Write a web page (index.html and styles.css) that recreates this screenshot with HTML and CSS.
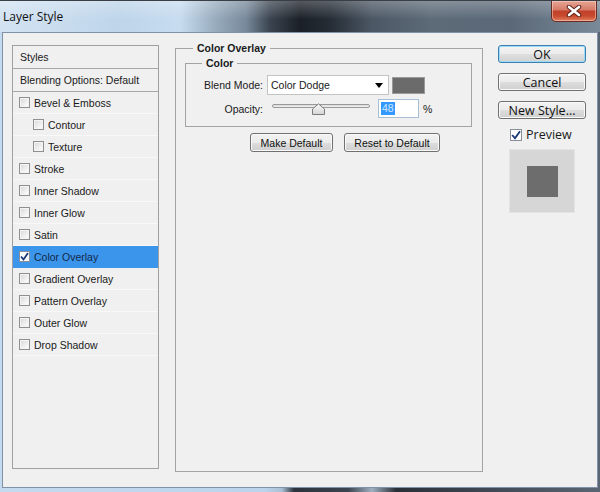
FILE: index.html
```html
<!DOCTYPE html>
<html>
<head>
<meta charset="utf-8">
<title>Layer Style</title>
<link rel="stylesheet" href="styles.css">
</head>
<body>
<div class="win">
  <div class="titlebar">
    <span class="title">Layer Style</span>
    <div class="close">
      <svg width="16" height="12" viewBox="0 0 16 12">
        <path d="M3 2 L13 10 M13 2 L3 10" stroke="#5a2018" stroke-width="4.5" stroke-linecap="round"/>
        <path d="M3 2 L13 10 M13 2 L3 10" stroke="#ffffff" stroke-width="2.6" stroke-linecap="round"/>
      </svg>
    </div>
  </div>
  <div class="client">
    <div class="list">
      <div class="hrow">Styles</div>
      <div class="hrow">Blending Options: Default</div>
      <div class="row"><span class="cb"></span>Bevel &amp; Emboss</div>
      <div class="row sub"><span class="cb"></span>Contour</div>
      <div class="row sub"><span class="cb"></span>Texture</div>
      <div class="row"><span class="cb"></span>Stroke</div>
      <div class="row"><span class="cb"></span>Inner Shadow</div>
      <div class="row"><span class="cb"></span>Inner Glow</div>
      <div class="row"><span class="cb"></span>Satin</div>
      <div class="row sel"><span class="cb on"><svg width="9" height="9" viewBox="0 0 9 9"><path d="M1 4.5 L3.5 7.5 L8 1" fill="none" stroke="#1c3a78" stroke-width="1.8"/></svg></span>Color Overlay</div>
      <div class="row"><span class="cb"></span>Gradient Overlay</div>
      <div class="row"><span class="cb"></span>Pattern Overlay</div>
      <div class="row"><span class="cb"></span>Outer Glow</div>
      <div class="row"><span class="cb"></span>Drop Shadow</div>
    </div>

    <fieldset class="group">
      <legend class="lg1">Color Overlay</legend>
      <fieldset class="inner">
        <legend class="lg2">Color</legend>
        <div class="frow">
          <span class="lbl">Blend Mode:</span>
          <div class="select">
            <span>Color Dodge</span>
            <svg width="8" height="5" viewBox="0 0 8 5"><path d="M0 0 H8 L4 5 Z" fill="#000"/></svg>
          </div>
          <span class="swatch"></span>
        </div>
        <div class="frow r2">
          <span class="lbl">Opacity:</span>
          <div class="slider">
            <span class="track"></span>
            <svg class="thumb" width="15" height="12" viewBox="0 0 15 12">
              <defs><linearGradient id="tg" x1="0" y1="0" x2="0" y2="1"><stop offset="0" stop-color="#fafafa"/><stop offset="1" stop-color="#d4d4d4"/></linearGradient></defs>
              <path d="M1.5 11.5 V6 L7.5 0.8 L13.5 6 V11.5 Z" fill="url(#tg)" stroke="#7c7c7c"/>
            </svg>
          </div>
          <div class="num"><span class="hl">48</span></div>
          <span class="pct">%</span>
        </div>
      </fieldset>
      <div class="btnrow">
        <div class="btn sm w1">Make Default</div>
        <div class="btn sm w2">Reset to Default</div>
      </div>
    </fieldset>

    <div class="side">
      <div class="btn big def">OK</div>
      <div class="btn big">Cancel</div>
      <div class="btn big">New Style...</div>
      <div class="prev"><span class="cb pcb on"><svg width="10" height="10" viewBox="0 0 10 10"><path d="M1.2 5 L4 8.3 L9 1.2" fill="none" stroke="#1c3a78" stroke-width="1.9"/></svg></span>Preview</div>
      <div class="pbox"><span class="psq"></span></div>
    </div>
  </div>
</div>
</body>
</html>
```
FILE: styles.css
```css
html, body {
  margin: 0;
  padding: 0;
}
body {
  width: 600px;
  height: 492px;
  overflow: hidden;
  font-family: "Liberation Sans", Arial, sans-serif;
  font-size: 10.5px;
  color: #1a1a1a;
}
.win {
  width: 600px;
  height: 492px;
  display: flex;
  flex-direction: column;
  background: linear-gradient(to right, #c4daee 0%, #bcd5ec 44%, #a9c0d4 47%, #2c333c 49%, #3a444f 58%, #9fb0c0 62%, #2a3038 66%, #3d4651 80%, #5a6673 100%);
}
.titlebar {
  height: 32px;
  flex: none;
  display: flex;
  justify-content: space-between;
  align-items: flex-start;
  background:
    linear-gradient(to bottom, rgba(255,255,255,0.25) 0%, rgba(255,255,255,0) 60%),
    linear-gradient(to right, #d3e3f2 0%, #bed5ea 20%, #c7dcef 30%, #97abbd 36%, #77899a 41%, #3a4450 45%, #1b2027 50%, #252c35 55%, #4b5764 62%, #5d6b79 72%, #5a6877 85%, #7a8a99 100%);
  border-top: 1px solid #3a3f46;
  box-sizing: border-box;
}
.title {
  font-family: "Open Sans", "Liberation Sans", sans-serif;
  font-size: 12px;
  color: #111;
  padding: 7px 0 0 3px;
}
.close {
  width: 44px;
  height: 20px;
  margin-right: 3px;
  border: 1px solid #6b2a22;
  border-top: none;
  border-radius: 0 0 5px 5px;
  background: linear-gradient(to bottom, #e7a595 0%, #d67a66 45%, #c0402a 50%, #c84a2e 75%, #e08060 100%);
  display: flex;
  align-items: center;
  justify-content: center;
  box-shadow: inset 0 0 0 1px rgba(255,220,210,0.5);
}
.client {
  flex: 1;
  margin: 0 2px 4px 2px;
  border: 1px solid #8093a6;
  background: #f0f0f0;
  display: flex;
  align-items: flex-start;
  padding: 8px 0 0 9px;
}
.list {
  width: 147px;
  height: 424px;
  box-sizing: border-box;
  border: 1px solid #a0a0a0;
  margin-top: 4px;
  flex: none;
}
.hrow {
  height: 22px;
  border-bottom: 1px solid #a7a7a7;
  display: flex;
  align-items: center;
  padding-left: 7px;
}
.row {
  height: 21px;
  border-bottom: 1px solid #f8f8f8;
  display: flex;
  align-items: center;
  padding-left: 6px;
  gap: 4px;
}
.row.sub {
  padding-left: 20px;
}
.row.sel {
  background: #3b95ea;
  color: #14284a;
  border-bottom-color: #3b95ea;
}
.cb {
  width: 11px;
  height: 11px;
  box-sizing: border-box;
  border: 1px solid #8f8f8f;
  background: linear-gradient(135deg, #d7d7d7 0%, #f4f4f4 70%, #fdfdfd 100%);
  box-shadow: inset 0 0 0 1px #f4f4f4;
  display: flex;
  align-items: center;
  justify-content: center;
  flex: none;
}
.cb.on {
  background: #ffffff;
  box-shadow: none;
  border-color: #8a8f99;
}
.group {
  width: 308px;
  height: 431px;
  box-sizing: border-box;
  margin: 0 0 0 16px;
  padding: 1px 10px 0 9px;
  border: 1px solid #a3a3a3;
  flex: none;
}
.lg1, .lg2 {
  font-weight: bold;
  line-height: 14px;
  padding: 0 4px;
  color: #1a1a1a;
}
.lg1 {
  margin-left: 8px;
}
.lg2 {
  margin-left: 16px;
}
.inner {
  margin: 0;
  padding: 5px 0 8px 0;
  border: 1px solid #a3a3a3;
}
.frow {
  display: flex;
  align-items: center;
  height: 20px;
}
.frow.r2 {
  height: 19px;
  margin-top: 4px;
}
.lbl {
  width: 77px;
  text-align: right;
  flex: none;
}
.select {
  margin-left: 4px;
  width: 122px;
  height: 20px;
  box-sizing: border-box;
  background: #ffffff;
  border: 1px solid #c3c3c3;
  display: flex;
  align-items: center;
  justify-content: space-between;
  padding: 0 5px 0 3px;
}
.swatch {
  margin-left: 3px;
  width: 33px;
  height: 17px;
  box-sizing: border-box;
  background: #6b6b6b;
  border: 1px solid #9a9a9a;
}
.slider {
  margin-left: 9px;
  width: 98px;
  height: 19px;
  display: flex;
  align-items: center;
  position: relative;
}
.track {
  width: 98px;
  height: 4px;
  box-sizing: border-box;
  border: 1px solid #9a9a9a;
  border-radius: 2px;
  background: linear-gradient(#d8d8d8, #f4f4f4);
  margin-top: -6px;
}
.thumb {
  position: absolute;
  left: 39px;
  top: 4px;
}
.num {
  margin-left: 8px;
  width: 41px;
  height: 19px;
  box-sizing: border-box;
  background: #fff;
  border: 1px solid #a8bed4;
  display: flex;
  align-items: center;
  padding-left: 2px;
}
.hl {
  background: #3399ff;
  color: #cfe6ff;
  line-height: 13px;
  padding: 0 1px;
}
.pct {
  margin-left: 4px;
}
.btnrow {
  display: flex;
  gap: 11px;
  margin: 6px 0 0 65px;
}
.btn {
  box-sizing: border-box;
  border: 1px solid #707070;
  border-radius: 3px;
  background: linear-gradient(to bottom, #f2f2f2 0%, #ebebeb 50%, #dddddd 51%, #cfcfcf 100%);
  box-shadow: inset 0 0 0 1px #fafafa;
  display: flex;
  align-items: center;
  justify-content: center;
  color: #111;
}
.btn.sm {
  height: 19px;
  font-size: 10.5px;
}
.w1 { width: 83px; }
.w2 { width: 96px; }
.side {
  margin: 4px 0 0 15px;
  width: 88px;
  display: flex;
  flex-direction: column;
  gap: 10px;
  flex: none;
}
.btn.big {
  height: 18px;
  width: 88px;
  font-family: "Open Sans", "Liberation Sans", sans-serif;
  font-size: 12.5px;
}
.btn.def {
  border-color: #3c7fb1;
  box-shadow: inset 0 0 0 1px #9bdcf7;
  background: linear-gradient(to bottom, #f4f4f4 0%, #ececec 50%, #dfdfdf 51%, #d2d2d2 100%);
}
.prev {
  display: flex;
  align-items: center;
  gap: 4px;
  margin: -1px 0 0 12px;
  font-family: "Open Sans", "Liberation Sans", sans-serif;
  font-size: 12.5px;
  height: 13px;
}
.pcb {
  width: 12px;
  height: 12px;
}
.pbox {
  margin: -2px 0 0 11px;
  width: 66px;
  height: 64px;
  box-sizing: border-box;
  background: #d6d6d6;
  border: 1px solid #e4e4e4;
  display: flex;
  align-items: center;
  justify-content: center;
}
.psq {
  width: 31px;
  height: 31px;
  background: #6d6d6d;
}
```
